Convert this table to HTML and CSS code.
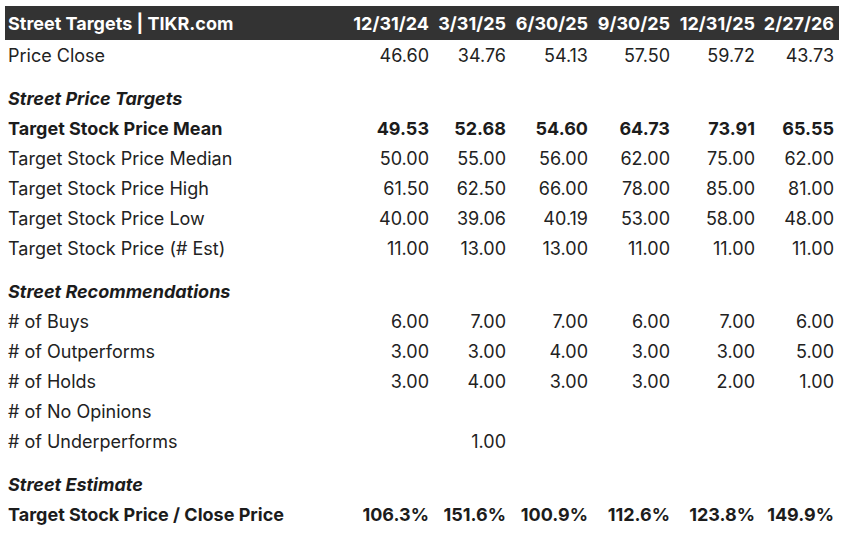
FILE: index.html
```html
<!DOCTYPE html>
<html>
<head>
<meta charset="utf-8">
<link rel="stylesheet" href="styles.css">
</head>
<body>
<div class="table">
  <div class="row head">
    <div class="label">Street Targets | TIKR.com</div>
    <div>12/31/24</div><div>3/31/25</div><div>6/30/25</div><div>9/30/25</div><div>12/31/25</div><div>2/27/26</div>
  </div>
  <div class="row">
    <div class="label">Price Close</div>
    <div>46.60</div><div>34.76</div><div>54.13</div><div>57.50</div><div>59.72</div><div>43.73</div>
  </div>
  <div class="spacer"></div>
  <div class="row section"><div class="label">Street Price Targets</div></div>
  <div class="row bold">
    <div class="label">Target Stock Price Mean</div>
    <div>49.53</div><div>52.68</div><div>54.60</div><div>64.73</div><div>73.91</div><div>65.55</div>
  </div>
  <div class="row">
    <div class="label">Target Stock Price Median</div>
    <div>50.00</div><div>55.00</div><div>56.00</div><div>62.00</div><div>75.00</div><div>62.00</div>
  </div>
  <div class="row">
    <div class="label">Target Stock Price High</div>
    <div>61.50</div><div>62.50</div><div>66.00</div><div>78.00</div><div>85.00</div><div>81.00</div>
  </div>
  <div class="row">
    <div class="label">Target Stock Price Low</div>
    <div>40.00</div><div>39.06</div><div>40.19</div><div>53.00</div><div>58.00</div><div>48.00</div>
  </div>
  <div class="row">
    <div class="label">Target Stock Price (# Est)</div>
    <div>11.00</div><div>13.00</div><div>13.00</div><div>11.00</div><div>11.00</div><div>11.00</div>
  </div>
  <div class="spacer"></div>
  <div class="row section"><div class="label">Street Recommendations</div></div>
  <div class="row">
    <div class="label"># of Buys</div>
    <div>6.00</div><div>7.00</div><div>7.00</div><div>6.00</div><div>7.00</div><div>6.00</div>
  </div>
  <div class="row">
    <div class="label"># of Outperforms</div>
    <div>3.00</div><div>3.00</div><div>4.00</div><div>3.00</div><div>3.00</div><div>5.00</div>
  </div>
  <div class="row">
    <div class="label"># of Holds</div>
    <div>3.00</div><div>4.00</div><div>3.00</div><div>3.00</div><div>2.00</div><div>1.00</div>
  </div>
  <div class="row">
    <div class="label"># of No Opinions</div>
    <div></div><div></div><div></div><div></div><div></div><div></div>
  </div>
  <div class="row">
    <div class="label"># of Underperforms</div>
    <div></div><div>1.00</div><div></div><div></div><div></div><div></div>
  </div>
  <div class="spacer"></div>
  <div class="row section"><div class="label">Street Estimate</div></div>
  <div class="row bold">
    <div class="label">Target Stock Price / Close Price</div>
    <div>106.3%</div><div>151.6%</div><div>100.9%</div><div>112.6%</div><div>123.8%</div><div>149.9%</div>
  </div>
</div>
</body>
</html>
```

FILE: styles.css
```css
html, body {
  margin: 0;
  background: #ffffff;
}
body {
  padding: 6px 5px 0 5px;
  font-family: Inter, "Liberation Sans", sans-serif;
  font-size: 18px;
  color: #222222;
}
.table {
  width: 834px;
}
.row {
  display: grid;
  grid-template-columns: 347px 82px 77px 82px 82px 85px 79px;
  height: 30px;
  align-items: center;
}
.row > div {
  text-align: right;
  padding-right: 5px;
  padding-top: 1px;
  white-space: nowrap;
}
.row > .label {
  text-align: left;
  padding-left: 3px;
  padding-right: 0;
}
.head {
  height: 34px;
  background: #333333;
  color: #ffffff;
  font-weight: 700;
}
.bold {
  font-weight: 700;
  color: #1c1c1c;
}
.section {
  font-weight: 700;
  font-style: italic;
  color: #1c1c1c;
}
.spacer {
  height: 13px;
}
```
